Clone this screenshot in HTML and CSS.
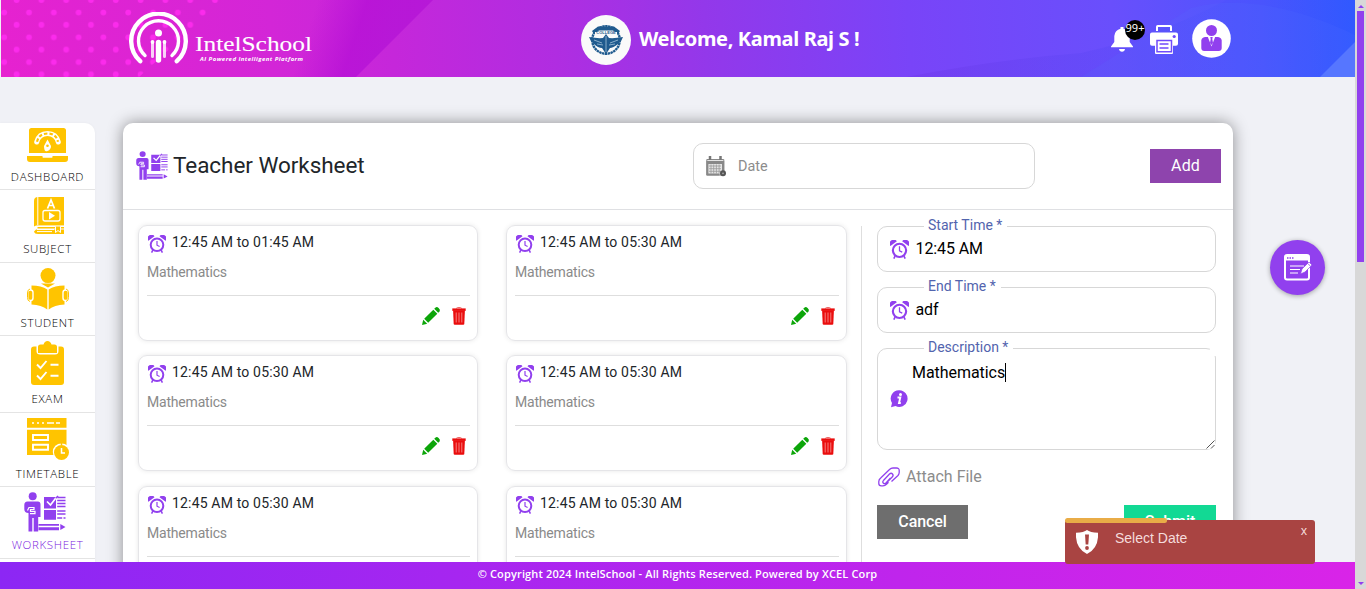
FILE: index.html
```html
<!DOCTYPE html>
<html lang="en">
<head>
<meta charset="utf-8">
<title>IntelSchool - Teacher Worksheet</title>
<link rel="stylesheet" href="styles.css">
</head>
<body>
<svg class="sprite" aria-hidden="true">
  <symbol id="clock" viewBox="0 0 18 18">
    <path d="M.4 5.800A3.700 3.700 0 0 1 6.500 1.200zM17.600 5.800A3.700 3.700 0 0 0 11.500 1.200z" fill="#9140ee"/>
    <circle cx="9" cy="9.800" r="6.300" fill="#fff" stroke="#9140ee" stroke-width="2"/>
    <path d="M9 6v4.200l2.600 1.300" fill="none" stroke="#9140ee" stroke-width="1.200"/>
    <path d="M4.800 15.200 3.600 17.600M13.200 15.200l1.200 2.400" stroke="#9140ee" stroke-width="1.500"/>
  </symbol>
  <symbol id="pencil" viewBox="0 0 20 20">
    <path d="M1 19 2.200 13.800 6.200 17.800zM3.200 12.800 12.300 3.700 16.300 7.700 7.200 16.800zM13.200 2.800 14.600 1.400Q16 .4 17.600 2 19.700 4 18.600 5.400L17.200 6.800z" fill="#0ca509"/>
  </symbol>
  <symbol id="trash" viewBox="0 0 14 18">
    <path d="M4.500 1.500Q4.600.5 5.500.5h3Q9.400.5 9.500 1.500" fill="none" stroke="#ee6a6a"/>
    <path d="M.3 1.400h13.400v2.500H.3z" fill="#ea0d0d"/>
    <path d="M1.100 3.500h11.800L12.300 17q-.1.800-1 .8H2.700q-.9 0-1-.8z" fill="#ea0d0d"/>
    <path d="M4.200 5.500v10M7 5.500v10M9.800 5.500v10" stroke="#f78c8c" stroke-width=".9"/>
  </symbol>
  <symbol id="worksheet" viewBox="0 0 42 40">
    <g fill="#9140ee">
      <circle cx="8.700" cy="4.200" r="4"/>
      <path d="M3.500 9.500h10.400q2.600 0 2.600 3V25h-2.300v14.500H9.700V26H8.300v13.500H4.500V21Q.3 21 .3 17v-4q0-3.500 3.200-3.500z"/>
      <path d="M20 5h12v11.500H20zM20 18h12v9.700H20zM14.500 32h20.500v1.800H14.500zM14.500 35.300h20.500v2.900H14.500zM36.300 32l5.200 3-5.200 3.100z"/>
    </g>
    <path d="M33.200 5.500h8.300M33.200 8.500h8.300M33.200 11.500h8.300M33.200 14.500h8.300M33.200 19h8.300M33.200 22h8.300M33.200 26h5M39.500 26h2" stroke="#9140ee" stroke-width="1.300"/>
    <path d="M3.500 18.500 5 15.500h5v2H6.500v1.800H11v2.400H6" fill="none" stroke="#fff" stroke-width="1.200"/>
    <path d="M23 9.500l3.500 3.500L33 4.500" fill="none" stroke="#fff" stroke-width="1.700"/>
    <path d="M31.200 5.800 33.600 3.400l1 1-2.400 2.400z" fill="#9140ee"/>
  </symbol>
</svg>

<div class="app">
  <header class="topbar">
    <svg class="topbar-art" viewBox="0 0 1354 77" preserveAspectRatio="none">
      <defs>
        <linearGradient id="hg" gradientUnits="userSpaceOnUse" x1="0" y1="60" x2="1354" y2="0">
          <stop offset="0" stop-color="#e622d0"/><stop offset=".2" stop-color="#d326d7"/>
          <stop offset=".29" stop-color="#c527da"/><stop offset=".41" stop-color="#b02de1"/>
          <stop offset=".52" stop-color="#9338ea"/><stop offset=".67" stop-color="#7944f8"/>
          <stop offset=".82" stop-color="#694ffc"/><stop offset=".93" stop-color="#4c55fd"/><stop offset="1" stop-color="#2c5bff"/>
        </linearGradient>
        <linearGradient id="fold" gradientUnits="userSpaceOnUse" x1="310" y1="20" x2="385" y2="45">
          <stop offset="0" stop-color="#b80fd6" stop-opacity="0"/><stop offset=".6" stop-color="#b50fd6" stop-opacity=".75"/><stop offset="1" stop-color="#b414d6" stop-opacity=".8"/>
        </linearGradient>
        <pattern id="dots" width="24.800" height="24.800" patternUnits="userSpaceOnUse">
          <circle cx="3.200" cy="12.500" r="2.900" fill="#fb2bec"/>
          <circle cx="15.600" cy="0" r="2.900" fill="#fb2bec"/><circle cx="15.600" cy="24.800" r="2.900" fill="#fb2bec"/>
        </pattern>
        <linearGradient id="shade" gradientUnits="userSpaceOnUse" x1="910" y1="0" x2="1250" y2="0"><stop offset="0" stop-color="#6d35e4" stop-opacity=".35"/><stop offset="1" stop-color="#4150ff" stop-opacity=".2"/></linearGradient>
      </defs>
      <rect width="1354" height="77" fill="url(#hg)"/>
      <path d="M0 0h222L138 77H0z" fill="url(#dots)"/>
      <path d="M290 0h142l-77 77h-115z" fill="url(#fold)"/>
      <path d="M905 77Q1000 59 1080 53 1160 35 1225 0H1354V77z" fill="url(#shade)"/>
      <path d="M1190 8Q1260-10 1354 35V77H1080z" fill="#5577ff" opacity=".13"/>
      <path d="M1354 42v35h-35z" fill="#5676ff"/>
    </svg>
    <svg class="logo" width="190" height="60" viewBox="0 0 190 60">
      <g fill="none" stroke="#fff" stroke-linecap="round">
        <path d="M12.200 49.200A27.300 27.300 0 1 1 48.800 49.200" stroke-width="4.400"/>
        <path d="M17 43.500A20 20 0 1 1 44 43.500" stroke-width="3.400"/>
        <path d="M30.500 30.500v17.500" stroke-width="5.400"/>
        <path d="M24.500 31v13.500M36.500 31v13.500" stroke-width="3" opacity=".8"/>
      </g>
      <circle cx="30.500" cy="21" r="3.500" fill="#fff"/><circle cx="24.500" cy="30" r="1.900" fill="#fff"/><circle cx="36.500" cy="30" r="1.900" fill="#fff"/>
      <text class="logo-name" x="67" y="39" textLength="117" lengthAdjust="spacingAndGlyphs">IntelSchool</text>
      <text class="logo-tag" x="72" y="49" textLength="103">AI Powered Intelligent Platform</text>
    </svg>
    <div class="welcome">
      <svg width="50" height="50" viewBox="0 0 50 50">
        <circle cx="25" cy="25" r="25" fill="#fafafa"/>
        <circle cx="25" cy="25" r="13.800" fill="none" stroke="#205b8f" stroke-width="2.400" stroke-dasharray="2.400 .5"/>
        <path d="M11 16l6-4.500h16l6 4.500-2 3-5-3.500H18L13 19z" fill="#1f5a8e"/>
        <path d="M14 17h22v5H14z" fill="#fafafa"/>
        <path d="M8 22q8 1.500 14 1l3-4 3 4q6 .5 14-1-1 4-5 7-5 4-8 4l-4 6-4-6q-4 0-8-4-4-3-5-7z" fill="#1f5a8e"/>
        <path d="M13 25l8 3M37 25l-8 3M25 21v16M16 29l6 1M34 29l-6 1" stroke="#a5c3da" stroke-width=".8"/>
        <text class="crest" x="25" y="19" text-anchor="middle">COLLEGE</text>
      </svg>
      <h1>Welcome, Kamal Raj S !</h1>
    </div>
    <div class="tools">
      <div class="bell">
        <svg width="22" height="25" viewBox="0 0 22 25"><path d="M0 19.500 3.300 15V9Q4 3 9.500 1.800V0h3v1.800Q18 3 18.700 9v6l3.300 4.500v.8H0zM8 22h6q-.5 2.800-3 2.800T8 22z" fill="#fff"/></svg>
        <span class="count">99+</span>
      </div>
      <svg width="28" height="29" viewBox="0 0 28 29">
        <path d="M7 6V1.700Q7 1 7.700 1h12.600q.7 0 .7.700V6" fill="none" stroke="#fff" stroke-width="2"/>
        <path d="M2 7.500h24q2 0 2 2v9.300q0 2-2 2h-3V28q0 1-1 1H6q-1 0-1-1v-7.200H2q-2 0-2-2V9.500q0-2 2-2z" fill="#fff"/>
        <path d="M7 15.500h14.500v11.300H7z" fill="#fff" stroke="#704afb" stroke-width="1.500"/>
        <path d="M9.500 19h9M9.500 23h9" stroke="#704afb" stroke-width="1.500"/>
        <circle cx="24.200" cy="11.500" r="1.600" fill="#704afb"/>
      </svg>
      <svg class="avatar" width="39" height="39" viewBox="0 0 39 39">
        <circle cx="19.500" cy="19.500" r="19.300" fill="#fff"/>
        <circle cx="19.500" cy="11.500" r="5.500" fill="#9140ee"/>
        <path d="M9.300 21.500Q9.500 18.500 13 18h13q3.500.5 3.700 3.500V29q0 3-3 3H12.300q-3 0-3-3z" fill="#9140ee"/>
        <path d="M15.800 17.800h7.400L19.500 27.500z" fill="#fff"/><path d="M18.300 18h2.400l-.4 2 .7 4-1.500 2-1.500-2 .7-4z" fill="#9140ee"/>
      </svg>
    </div>
  </header>

  <main class="stage">
    <nav class="side">
      <a class="item dash"><svg width="41" height="34" viewBox="0 0 41 34">
        <path d="M2 2.500Q2 0 4.500 0h32Q39 0 39 2.500V25H2zM0 28h15.500v1.500h10V28H41v3q0 3-3 3H3q-3 0-3-3z" fill="#ffc400"/>
        <path d="M9.700 14Q12 5.500 20.500 5.500T31.300 14" fill="none" stroke="#fff" stroke-width="5" stroke-linecap="round"/>
        <path d="M10 13.800Q12 5.500 20.500 5.500T31 13.800" fill="none" stroke="#ffc400" stroke-width="2.200" stroke-dasharray="3.500 2"/>
        <path d="M20.500 11.500 24 18q0 3.500-3.500 5T17 18z" fill="#fff"/><circle cx="20.500" cy="17.800" r="1.300" fill="#ffc400"/><path d="M16 29h9" stroke="#fff"/>
      </svg><span>DASHBOARD</span></a>
      <a class="item subj"><svg width="30" height="37" viewBox="0 0 30 37">
        <path d="M4 0h26v28.500H3q-1.500 0-3 1V4Q0 0 4 0zM3.500 30H30v1.500H3.500zM2 32.500h28V37H4Q.5 37 0 34.500z" fill="#ffc400"/>
        <path d="M3.800 0v28M2.500 29.300H30M3 32.500h17M3 34.600h15" stroke="#fff" stroke-width="1"/>
        <path d="M13.500 11.500 17 3l3.500 8.500M14.700 8.500h4.600" fill="none" stroke="#fff" stroke-width="1.700"/>
        <rect x="9" y="13.500" width="17" height="10.500" rx="2" fill="none" stroke="#fff" stroke-width="1.300"/>
        <path d="M15 15v7.500l6-3.700z" fill="#fff"/><path d="M21.500 29.500v6l2.500-2 2.500 2v-6" fill="#ffc400" stroke="#fff"/>
      </svg><span>SUBJECT</span></a>
      <a class="item stud"><svg width="42" height="42" viewBox="0 0 42 42">
        <g fill="#ffc400"><circle cx="21" cy="7.600" r="7.500"/><path d="M14 15.500h14l-7 4zM4.500 17.500q10 0 15.800 4v20Q14.500 37 4.500 36.500zM37.500 17.500q-10 0-15.800 4v20Q27.500 37 37.500 36.500z"/></g>
        <rect x=".7" y="22" width="5.300" height="10.500" rx="2.600" fill="#ffc400" stroke="#fff" stroke-width="1.400"/>
        <rect x="36" y="22" width="5.300" height="10.500" rx="2.600" fill="#ffc400" stroke="#fff" stroke-width="1.400"/>
        <path d="M3 21Q.5 21.500.5 25v4.500Q.5 33 3 33.500M39 21q2.500.5 2.500 4v4.500q0 3.500-2.500 4" fill="none" stroke="#ffc400"/>
      </svg><span>STUDENT</span></a>
      <a class="item exam"><svg width="33" height="44" viewBox="0 0 33 44">
        <path d="M3 5.500h27q3 0 3 3V41q0 3-3 3H3q-3 0-3-3V8.500q0-3 3-3z" fill="#ffc400"/>
        <path d="M5.500 5v5q0 3.500 3.500 3.500h15q3.500 0 3.500-3.500V5z" fill="#fff"/>
        <path d="M7 12V6q0-2.500 2.500-2.500h3Q13.500 0 16.500 0t4 3.500h3q2.500 0 2.500 2.500v6z" fill="#ffc400"/>
        <path d="M6 23.500l3.500 3.500 6-7M6 34.500l3.500 3.500 6-7M19.500 23.800h8M19.500 34.800h8" fill="none" stroke="#fff" stroke-width="1.900"/>
      </svg><span>EXAM</span></a>
      <a class="item time"><svg width="43" height="43" viewBox="0 0 43 43">
        <path d="M0 0h39.500v9.700H0zM0 11.800h39.500V37H0z" fill="#ffc400"/>
        <path d="M5 5h2M10 5h2M15 5h2M20 5h7M29 5h4" stroke="#fff" stroke-width="1.500"/>
        <path d="M6 17h15v5H6zM6 26.700h15v5H6z" fill="none" stroke="#fff" stroke-width="1.900"/>
        <circle cx="34.500" cy="34" r="8.700" fill="#fff"/><circle cx="34.500" cy="34.500" r="7.500" fill="#ffc400"/>
        <path d="M32 24.500h5M34.500 24v3" stroke="#ffc400" stroke-width="1.500"/><path d="M34.500 30v5H38" fill="none" stroke="#fff" stroke-width="1.500"/>
      </svg><span>TIMETABLE</span></a>
      <a class="item work active"><svg width="42" height="40"><use href="#worksheet"/></svg><span>WORKSHEET</span></a>
      <a class="item"></a>
    </nav>

    <section class="panel">
      <div class="panel-head">
        <h2><svg width="32" height="29" viewBox="0 0 42 40" preserveAspectRatio="none"><use href="#worksheet" width="42" height="40"/></svg>Teacher Worksheet</h2>
        <div class="date">
          <svg width="20" height="21" viewBox="0 0 20 21">
            <path d="M.8 3.500h17v15.500H.8z" fill="#e4e4e4" stroke="#888"/><path d="M.4 5h17.800v3H.4zM.4 5h2v14h-2zM16 5h2.200v12H16zM.4 17.500h13V19.500H.4z" fill="#888"/>
            <path d="M3 10h12M3 12.700h12M3 15.300h12M5 8.500v9M7.700 8.500v9M10.400 8.500v9M13.100 8.500v9" stroke="#999" stroke-width=".8"/>
            <path d="M4 0v4M14.500 0v4" stroke="#777" stroke-width="2.500"/><circle cx="17" cy="17.300" r="3" fill="#555"/><circle cx="17" cy="17.300" r=".9" fill="#aaa"/>
          </svg>
          <span>Date</span>
        </div>
        <button class="add">Add</button>
      </div>
      <div class="panel-body">
        <div class="cards">
          <article class="card"><h3><svg width="18" height="18"><use href="#clock"/></svg>12:45 AM to 01:45 AM</h3><p>Mathematics</p><div class="acts"><svg width="20" height="20"><use href="#pencil"/></svg><svg width="14" height="18"><use href="#trash"/></svg></div></article>
          <article class="card"><h3><svg width="18" height="18"><use href="#clock"/></svg>12:45 AM to 05:30 AM</h3><p>Mathematics</p><div class="acts"><svg width="20" height="20"><use href="#pencil"/></svg><svg width="14" height="18"><use href="#trash"/></svg></div></article>
          <article class="card"><h3><svg width="18" height="18"><use href="#clock"/></svg>12:45 AM to 05:30 AM</h3><p>Mathematics</p><div class="acts"><svg width="20" height="20"><use href="#pencil"/></svg><svg width="14" height="18"><use href="#trash"/></svg></div></article>
          <article class="card"><h3><svg width="18" height="18"><use href="#clock"/></svg>12:45 AM to 05:30 AM</h3><p>Mathematics</p><div class="acts"><svg width="20" height="20"><use href="#pencil"/></svg><svg width="14" height="18"><use href="#trash"/></svg></div></article>
          <article class="card"><h3><svg width="18" height="18"><use href="#clock"/></svg>12:45 AM to 05:30 AM</h3><p>Mathematics</p><div class="acts"><svg width="20" height="20"><use href="#pencil"/></svg><svg width="14" height="18"><use href="#trash"/></svg></div></article>
          <article class="card"><h3><svg width="18" height="18"><use href="#clock"/></svg>12:45 AM to 05:30 AM</h3><p>Mathematics</p><div class="acts"><svg width="20" height="20"><use href="#pencil"/></svg><svg width="14" height="18"><use href="#trash"/></svg></div></article>
        </div>
        <form class="form">
          <div class="field"><span class="label">Start Time *</span><svg width="19" height="19"><use href="#clock"/></svg><span class="value">12:45 AM</span></div>
          <div class="field"><span class="label">End Time *</span><svg width="19" height="19"><use href="#clock"/></svg><span class="value">adf</span></div>
          <div class="field area"><span class="label">Description *</span>
            <svg width="19" height="18" viewBox="0 0 19 18"><path d="M9.500.3A8.300 8.300 0 1 1 5.500 16L1 17.200 2 13A8.300 8.300 0 0 1 9.500.3z" fill="#9140ee"/><circle cx="10.500" cy="4.600" r="1.500" fill="#fff"/><path d="M7.500 7.500h2.800L9 13h1.800" fill="none" stroke="#fff" stroke-width="1.900"/></svg>
            <span class="value">Mathematics</span><i class="caret"></i><i class="corner"></i>
            <svg class="grip" width="9" height="9" viewBox="0 0 9 9"><path d="M.5 8.500l8-8M5 8.500l3.500-3.500" stroke="#555" fill="none"/></svg>
          </div>
          <div class="attach"><svg width="22" height="20" viewBox="0 0 22 20"><path d="M5.200 13.800 11.500 7q1.700-1.500 3 0t-.3 3L8.500 15.700M20 8.500l-6.500 6M20 8.500Q21.200 7 21.200 5.500V3.500Q21.200 1 18.500 1H15q-2 0-3.500 1.500L2.700 11Q.8 12.500.8 14.500V16.500q0 2.300 2.500 2.300H5q2 0 3.500-1.500l2-2M5.200 13.800q-1 1.200 0 2.200t2.300.5L12.500 11" fill="none" stroke="#9140ee" stroke-width="1.300"/></svg>Attach File</div>
          <div class="buttons"><button class="cancel" type="button">Cancel</button><button class="submit" type="button">Submit</button></div>
        </form>
      </div>
    </section>

    <button class="fab"><svg width="28" height="27" viewBox="0 0 28 27">
      <rect x="1" y="1" width="24" height="24.500" rx="2" fill="none" stroke="#fff" stroke-width="2"/><path d="M1 1h24v5.500H1z" fill="#fff"/><path d="M3 4h1.500M5.500 4h1.500M8 4h1.500" stroke="#9140ee" stroke-width="1.300"/>
      <path d="M6 12h14M6 15.500h10M6 19h8" stroke="#fff" stroke-width="1.200"/>
      <path d="M16.500 20 18 15l7-7 3 3-7 7z" fill="#fff" stroke="#9140ee" stroke-width=".7"/><path d="M23.800 9.500l2.500 2.500" stroke="#9140ee" stroke-width=".8"/>
    </svg></button>
  </main>

  <footer class="foot">© Copyright 2024 IntelSchool - All Rights Reserved. Powered by XCEL Corp</footer>
</div>

<div class="scroll"><i class="up"></i><i class="thumb"></i><i class="down"></i></div>

<div class="toast">
  <i class="progress"></i>
  <svg width="22" height="24" viewBox="0 0 22 24"><path d="M11 0Q14 2.500 22 2.700 23 18 11 24-1 18 0 2.700 8 2.500 11 0z" fill="#fff"/><path d="M9 4.500h4l-.7 10H9.700z" fill="#a94442"/><circle cx="11" cy="18" r="1.900" fill="#a94442"/></svg>
  <span class="msg">Select Date</span><span class="close">x</span>
</div>
</body>
</html>
```
FILE: styles.css
```css
* { box-sizing: border-box; }
body { margin: 0; display: flex; width: 1366px; height: 589px; overflow: hidden; background: #f0f1f6; font-family: Roboto, sans-serif; color: #212529; }
svg { display: block; flex: none; }
h1, h2, h3, p { margin: 0; font-weight: 400; }
button { border: 0; padding: 0; font-family: inherit; color: #fff; }
.sprite { position: absolute; width: 0; height: 0; }
.app { width: 1355px; height: 589px; display: flex; flex-direction: column; }

/* Top bar */
.topbar { position: relative; height: 77px; flex: none; margin-left: 1px; display: flex; align-items: flex-start; }
.topbar-art { position: absolute; inset: 0; width: 1354px; height: 77px; }
.topbar > :not(.topbar-art) { position: relative; }
.logo { margin: 12px 0 0 127px; }
.logo-name { font: 22px "Liberation Serif", serif; fill: #fff; stroke: #fff; stroke-width: .1px; }
.logo-tag { font: italic bold 6px "Open Sans", sans-serif; fill: #fff; }
.welcome { display: flex; align-items: center; gap: 8px; margin: 14px 0 0 263px; width: 290px; white-space: nowrap; }
.welcome h1 { font: 700 20px/50px "Noto Sans", sans-serif; color: #fff; letter-spacing: -.35px; padding-bottom: 2px; }
.crest { font: bold 4px "Liberation Sans", sans-serif; fill: #1f5a8e; }
.tools { display: flex; margin: 19px 0 0 240px; }
.tools > svg { margin: 6px 0 0 16px; }
.tools > .avatar { margin: 0 0 0 14px; }
.bell { position: relative; padding-top: 8px; width: 23px; }
.count { position: absolute; left: 14px; top: 1px; width: 20px; height: 20px; border-radius: 50%; background: #000; color: #fff; font: 11px/16px "Noto Sans", sans-serif; display: flex; justify-content: center; }

/* Work area */
.stage { height: 485px; display: flex; align-items: flex-start; padding-top: 46px; overflow: hidden; }
.side { width: 95px; flex: none; background: #fff; border-radius: 0 10px 0 0; box-shadow: 0 0 3px #0000000a; }
.item { height: 73px; display: flex; flex-direction: column; align-items: center; justify-content: space-between; border-bottom: 1px solid #e4e4e4; font: 300 11.500px/13px "Open Sans", sans-serif; letter-spacing: .65px; color: #000; padding-bottom: 6px; }
.dash { height: 67px; padding-top: 5px; }
.subj { padding-top: 7px; padding-bottom: 7px; }
.subj svg { margin-left: 2px; }
.stud { padding-top: 5px; }
.exam { height: 77px; padding-top: 5px; padding-bottom: 7px; }
.time { height: 74px; padding-top: 5px; }
.time svg { margin-left: 1px; }
.work { height: 72px; padding-top: 5px; padding-bottom: 7px; }
.work svg { margin-right: 6px; }
.item.active { color: #7a22e0; }

.panel { width: 1110px; height: 600px; flex: none; margin-left: 28px; background: #fff; border-radius: 10px; box-shadow: 0 0 16px #0000006b; }
.panel-head { height: 87px; border-bottom: 1px solid #dfe0e3; display: flex; align-items: flex-start; padding: 20px 12px 0; }
h2 { width: 558px; display: flex; align-items: center; gap: 5px; padding: 5px 0 0 1px; font-size: 22.500px; line-height: 34px; letter-spacing: -.05px; }
h2 svg { margin-top: 1px; }
.date { width: 342px; height: 46px; border: 1px solid #d7d7d7; border-radius: 10px; display: flex; align-items: center; gap: 12px; padding-left: 12px; color: #8c8c8c; font-size: 14.400px; }
.add { width: 71px; height: 34px; margin: 6px 0 0 auto; padding-bottom: 1px; background: #8e44ad; font-size: 16px; letter-spacing: .1px; }
.panel-body { display: flex; padding: 15px 0 0 15px; }
.cards { width: 709px; flex: none; display: grid; grid-template-columns: 340px 341px; grid-auto-rows: 116px; gap: 14.400px 28px; }
.card { border: 1px solid #e5e5e8; border-radius: 9px; box-shadow: 0 0 5px #00000018; padding: 7px 7px 0 8px; }
.card h3 { display: flex; gap: 6px; align-items: center; padding-left: 1px; font-size: 14px; line-height: 18px; letter-spacing: .17px; height: 18px; }
.card h3 svg { margin-top: 4px; }
.card p { height: 45px; padding-top: 13px; border-bottom: 1px solid #dedede; font-size: 14px; line-height: 17px; color: #8a8a8a; letter-spacing: -.2px; }
.acts { display: flex; justify-content: flex-end; align-items: center; gap: 11px; padding: 10px 4px 0 0; }

/* Entry form */
.form { width: 355px; height: 400px; margin: 1px 0 0 14px; border-left: 1px solid #dedede; padding-left: 15px; }
.field { position: relative; width: 339px; height: 46px; margin-bottom: 15px; border: 1px solid #d7d7d7; border-radius: 10px; display: flex; align-items: center; padding-left: 12px; color: #000; font-size: 16px; }
.field .value { margin-left: 6.500px; margin-top: -2px; letter-spacing: -.1px; }
.label { position: absolute; left: 46px; top: -12px; padding: 0 5px 0 4px; line-height: 20px; background: #fff; font-size: 14px; color: #5264ae; }
.area { height: 102px; align-items: flex-start; padding-top: 14px; margin-bottom: 0; }
.area > svg:not(.grip) { margin-top: 27px; }
.field.area .value { margin: 0 0 0 3px; letter-spacing: -.05px; }
.caret { width: 1px; height: 19px; background: #000; }
.corner { position: absolute; right: -1px; top: -1px; width: 6px; height: 8px; background: #fff; }
.grip { position: absolute; right: 0; bottom: 0; background: #fff; }
.attach { display: flex; align-items: center; gap: 6px; height: 20px; margin: 17px 0 18px 1px; padding-bottom: 1px; font-size: 16px; color: #8c8c8c; }
.buttons { width: 339px; display: flex; justify-content: space-between; }
.buttons button { width: 91px; height: 34px; padding-bottom: 2px; font-size: 16px; font-weight: 500; letter-spacing: -.1px; background: #6e6e6e; }
.buttons .submit { width: 92px; background: #12d994; }
.fab { flex: none; width: 55px; height: 55px; margin: 117px 0 0 37px; border-radius: 50%; background: #9140ee; display: flex; align-items: center; justify-content: center; box-shadow: 0 1px 5px #0005; }

.foot { height: 27px; background: linear-gradient(90deg, #8c27f4, #d924e8); color: #fff; font: 600 11px/24px "Open Sans", sans-serif; letter-spacing: .15px; text-align: center; }

/* Page scrollbar */
.scroll { width: 11px; display: flex; flex-direction: column; align-items: center; background: #d8d8d8; padding: 5px 0 4px; }
.up { border: 3px solid transparent; border-top: 0; border-bottom-color: #9140ee; }
.thumb { width: 7px; height: 251px; margin-top: 3px; background: #9140ee; }
.down { margin-top: auto; border: 3px solid transparent; border-bottom: 0; border-top-color: #9140ee; }

/* Notification over the page */
.toast { position: absolute; left: 1065px; top: 520px; width: 250px; height: 44px; display: flex; align-items: flex-start; padding: 10px 8px 0 11px; border-radius: 3px; background: #a94442; color: #f5dcdc; }
.progress { position: absolute; left: 0; top: -2px; width: 102px; height: 5px; border-radius: 3px; background: #e9ac47; }
.msg { margin-left: 17px; font: 14px/16px "Liberation Sans", sans-serif; }
.close { margin-left: auto; margin-top: -6px; font: 12px/14px "Noto Sans", sans-serif; }
```
